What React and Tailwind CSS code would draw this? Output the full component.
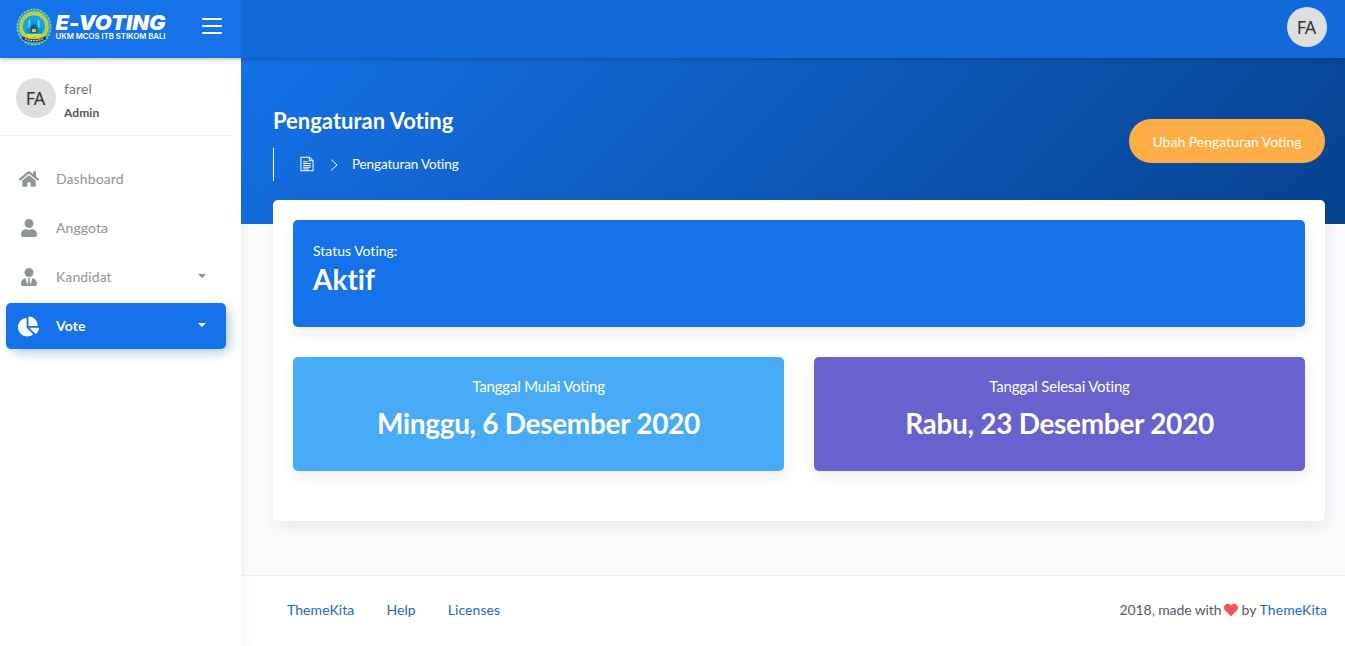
import React from "react";
import { FaHome, FaUser, FaUserTie, FaChartPie, FaHeart } from "react-icons/fa";

function Emblem() {
  return (
    <svg className="block h-[38px] w-[36px] shrink-0" viewBox="0 0 36 38" aria-hidden="true">
      <ellipse cx="18" cy="19" rx="16.8" ry="17.8" fill="#3aa9b4" stroke="#7fcfa8" strokeWidth="1.4" strokeDasharray="2.2 1.3" />
      <ellipse cx="18" cy="18.6" rx="14.6" ry="15.2" fill="#c9d93c" />
      <ellipse cx="18" cy="18.6" rx="12.8" ry="13.4" fill="none" stroke="#a9b83e" strokeWidth="1.4" strokeDasharray="1.2 1.1" />
      <circle cx="18" cy="18.4" r="11.2" fill="#14a3e6" />
      <path d="M12.5 25V13l.8-2 .8 2v12zM21.9 25V13l.8-2 .8 2v12z" fill="#6fdcf2" />
      <path d="M10 25h16v-4l-3-1-2-4-3-3-3 3-2 4-3 1z" fill="#1590cc" />
      <path d="M14.5 21c0-2.6 1.6-3.6 3.5-5 1.9 1.4 3.5 2.4 3.5 5v4h-7z" fill="#1c5a80" />
      <path d="M16 21h4v3h-4z" fill="#d8c94a" />
      <path d="M9.5 26h17l-2 3h-13z" fill="#e2d63d" />
      <path d="M6.5 28c3.5 2.6 7 3.2 11.5 3.2S26 30.600 29.500 28l.6 3c-3.500 2.400-7.200 3.200-12.100 3.200S9.400 33.400 5.900 31z" fill="#2b3a42" />
      <path d="M9 30.800c5.500 2.500 12.500 2.500 18 0" fill="none" stroke="#d8dedb" strokeWidth="1.300" strokeDasharray="1.800 1" />
    </svg>
  );
}

function Avatar() {
  return (
    <div className="flex size-10 shrink-0 items-center justify-center rounded-full bg-[#dfdfdf] pr-[2px] font-['Noto_Sans',sans-serif] text-[18px] tracking-[-0.9px] text-[#333]">
      FA
    </div>
  );
}

function Caret() {
  return <span className="mb-[1px] ml-auto mr-5 border-x-[4px] border-t-[4px] border-x-transparent border-t-current" />;
}

const items = [
  { label: "Dashboard", Icon: FaHome },
  { label: "Anggota", Icon: FaUser },
  { label: "Kandidat", Icon: FaUserTie, caret: true },
  { label: "Vote", Icon: FaChartPie, caret: true, active: true },
];

function Sidebar() {
  return (
    <aside className="relative z-10 w-[241px] shrink-0 bg-white shadow-[4px_4px_10px_rgba(69,65,78,0.06)]">
      <div className="mr-[10px] flex h-[78px] gap-2 border-b border-[#f1f1f1] pl-4 pt-5">
        <Avatar />
        <div className="flex flex-col">
          <span className="text-[14px] leading-[22px] tracking-[0.1px] text-[#777]">farel</span>
          <span className="text-[12px] leading-[26px] font-bold tracking-[0.1px] text-[#555]">Admin</span>
        </div>
      </div>
      <nav className="mt-5 ml-[6px] flex w-[220px] flex-col gap-[3px]">
        {items.map(({ label, Icon, caret, active }) => (
          <a
            key={label}
            className={
              active
                ? "flex h-[46px] items-center rounded-[5px] bg-[#1572e8] pb-[2px] pl-[12px] font-bold text-white shadow-[4px_4px_10px_rgba(0,0,0,0.1),4px_4px_15px_-5px_rgba(21,114,232,0.4)]"
                : "flex h-[46px] items-center pb-[2px] pl-[12px] text-[#8d9498]"
            }
          >
            <span className="mt-[2px] mr-[17px] flex w-[21px] justify-center">
              <Icon size={label === "Dashboard" ? 20 : label === "Vote" ? 21 : 18} />
            </span>
            <span className="tracking-[0.1px]">{label}</span>
            {caret && <Caret />}
          </a>
        ))}
      </nav>
    </aside>
  );
}

function DateCard({ label, value, tone }) {
  return (
    <div className={`flex h-[114px] flex-1 flex-col items-center rounded-[5px] pt-[18px] text-white shadow-[2px_6px_15px_rgba(69,65,78,0.1)] ${tone}`}>
      <span className="text-[15px] leading-[23px] tracking-[-0.17px]">{label}</span>
      <span className="mt-[6px] text-[28px] leading-[39px] font-bold tracking-[-0.31px]">{value}</span>
    </div>
  );
}

export default function App() {
  return (
    <div className="flex h-[646px] w-[1345px] flex-col overflow-hidden bg-[#f9fbfd] font-[Lato,sans-serif] text-[14px] text-[#575962] [font-variant-ligatures:none]">
      <header className="relative z-20 flex h-[58px] shrink-0 shadow-[0_0_5px_rgba(18,23,39,0.5)]">
        <div className="flex w-[241px] items-start bg-[#1572e8] pl-4 pt-2">
          <Emblem />
          <svg className="ml-[3px] block h-[40px] w-[113px]" viewBox="0 0 113 40" fill="#fff" fontFamily="Inter, sans-serif">
            <text x="0.500" y="22" fontSize="20" fontWeight="900" fontStyle="italic" textLength="110" lengthAdjust="spacingAndGlyphs">E-VOTING</text>
            <text x="0.500" y="31" fontSize="7" fontWeight="600" textLength="110" lengthAdjust="spacingAndGlyphs">UKM MCOS ITB STIKOM BALI</text>
          </svg>
          <div className="ml-[34px] mt-[10px] flex w-5 flex-col gap-[5px]">
            <span className="h-[2px] rounded-full bg-white" />
            <span className="h-[2px] rounded-full bg-white" />
            <span className="h-[2px] rounded-full bg-white" />
          </div>
        </div>
        <div className="flex flex-1 items-start justify-end bg-[#1269db] pr-[18px] pt-[7px]">
          <Avatar />
        </div>
      </header>

      <div className="flex min-h-0 flex-1">
        <Sidebar />
        <main className="flex min-w-0 flex-1 flex-col">
          <div className="flex h-[166px] shrink-0 items-start justify-between bg-[linear-gradient(-45deg,#06418e,#1572e8)] pl-8 pr-5 text-white">
            <div className="pt-[46px]">
              <h1 className="text-[22px] leading-[33px] font-bold">Pengaturan Voting</h1>
              <div className="mt-[11px] flex h-[33px] items-center border-l border-white pl-[26px]">
                <svg className="-mt-[2px] block h-4 w-[14px]" viewBox="0 0 15 16" fill="none" stroke="currentColor" strokeWidth="1.100">
                  <path d="M1 .7h9L14 4.500v10.800H1zM10 .7v3.800h4M3.500 5.500h4.500M3.500 7.500h8M3.500 9.500h8M3.500 11.500h8M3.500 13.300h6" />
                </svg>
                <svg className="ml-[16px] block h-3 w-2" viewBox="0 0 8 12" fill="none" stroke="currentColor" strokeWidth="1">
                  <path d="M1 .5 7 6 1 11.500" />
                </svg>
                <span className="ml-[14px] text-[13.5px] tracking-[-0.13px]">Pengaturan Voting</span>
              </div>
            </div>
            <button className="mt-[61px] h-11 w-[196px] rounded-full bg-[#ffad46] text-[14px]">Ubah Pengaturan Voting</button>
          </div>

          <section className="-mt-6 mr-5 ml-8 h-[321px] shrink-0 rounded-[5px] bg-white p-5 shadow-[2px_6px_15px_rgba(69,65,78,0.1)]">
            <div className="flex h-[107px] flex-col rounded-[5px] bg-[#1572e8] pl-5 pt-5 text-white shadow-[2px_6px_15px_rgba(69,65,78,0.1)]">
              <span className="leading-[22px]">Status Voting:</span>
              <span className="text-[28px] leading-[34px] font-bold">Aktif</span>
            </div>
            <div className="mt-[30px] flex gap-[30px]">
              <DateCard label="Tanggal Mulai Voting" value="Minggu, 6 Desember 2020" tone="bg-[#48abf7]" />
              <DateCard label="Tanggal Selesai Voting" value="Rabu, 23 Desember 2020" tone="bg-[#6861ce]" />
            </div>
          </section>

          <footer className="mt-auto flex h-[71px] shrink-0 items-center justify-between border-t border-[#eceef0] bg-white pr-[18px] pb-[3px] pl-[46px]">
            <div className="flex gap-8 tracking-[0.08px] text-[#1d68c9]">
              <a>ThemeKita</a>
              <a>Help</a>
              <a>Licenses</a>
            </div>
            <div className="flex items-center">
              <span className="tracking-[-0.1px]">2018, made with</span>
              <FaHeart size={14} className="mr-[3px] ml-[3px] text-[#f3545d]" />
              <span>by&nbsp;</span>
              <a className="tracking-[0.08px] text-[#1d68c9]">ThemeKita</a>
            </div>
          </footer>
        </main>
      </div>
    </div>
  );
}
